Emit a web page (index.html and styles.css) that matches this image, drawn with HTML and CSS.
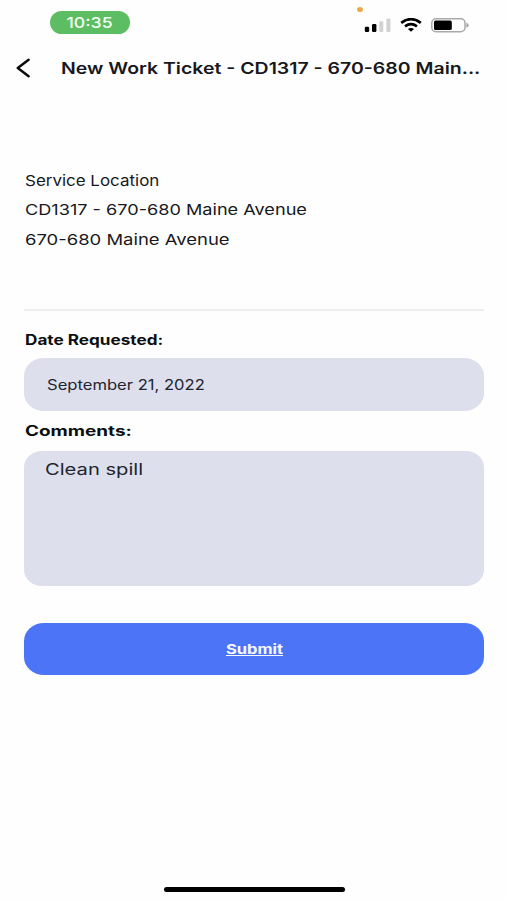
FILE: index.html
```html
<!DOCTYPE html>
<html lang="en">
  <head>
    <meta charset="UTF-8" />
    <meta name="viewport" content="width=device-width, initial-scale=1.0" />
    <title>New Work Ticket</title>
    <link rel="stylesheet" href="styles.css">
  </head>
  <body>
    <div class="status-bar">
      <div class="time"><span>10:35</span></div>
      <div class="status-icons">
        <span class="mic-dot"></span>
        <svg class="signal" width="27" height="14" viewBox="0 0 27 14">
          <rect x="0.8" y="8.7" width="4.4" height="5.3" rx="1.3" />
          <rect x="8" y="6" width="4.4" height="8" rx="1.3" />
          <rect class="off" x="15.3" y="3.2" width="4" height="10.8" rx="1.2" />
          <rect class="off" x="22.4" y="0.5" width="4" height="13.5" rx="1.2" />
        </svg>
        <svg class="wifi" width="22" height="14" viewBox="0 0 22 14">
          <path d="M1.2 4.9Q11 -2.6 20.8 4.9" />
          <path d="M5 8.3Q11 3.9 17 8.3" />
          <path class="wifi-base" d="M7.9 10.9Q11 8.9 14.1 10.9L11 13.7Z" />
        </svg>
        <svg class="battery" width="38" height="15" viewBox="0 0 38 15">
          <rect class="shell" x="0.8" y="0.8" width="33.2" height="13" rx="4.2" />
          <rect x="3" y="2.6" width="17.8" height="9.4" rx="1.6" />
          <path class="nub" d="M35.4 4.8Q37.6 5.6 37.6 7.3T35.4 9.8Z" />
        </svg>
      </div>
    </div>

    <header class="header">
      <svg class="back" width="15" height="20" viewBox="0 0 15 20">
        <path d="M12.6 1.7L1.8 10L12.6 18.2" />
      </svg>
      <h1>New Work Ticket - CD1317 - 670-680 Main...</h1>
    </header>

    <main>
      <div class="location">
        <p><span class="location-title">Service Location</span></p>
        <p><span class="location-name">CD1317 - 670-680 Maine Avenue</span></p>
        <p><span class="location-street">670-680 Maine Avenue</span></p>
      </div>

      <div class="label"><span class="label-date">Date Requested:</span></div>
      <div class="field"><span>September 21, 2022</span></div>
      <div class="label"><span class="label-comments">Comments:</span></div>
      <div class="comments"><span>Clean spill</span></div>
      <button class="submit"><span>Submit</span></button>
    </main>

    <div class="home-bar"></div>
  </body>
</html>
```
FILE: styles.css
```css
* {
  box-sizing: border-box;
}
body {
  margin: 0;
  height: 900px;
  display: flex;
  flex-direction: column;
  background: #fefefe;
  color: #17181c;
  font-family: Inter, "Liberation Sans", sans-serif;
}
p,
h1 {
  margin: 0;
}
/* wide lettering */
span,
h1 {
  display: inline-block;
  white-space: nowrap;
  transform-origin: left center;
}
.status-bar {
  height: 46px;
  padding: 11px 38px 0 50px;
  display: flex;
  justify-content: space-between;
  align-items: flex-start;
}
.time {
  width: 80px;
  height: 23px;
  line-height: 23px;
  border-radius: 12px;
  background: #5dbd63;
  color: #f4fff2;
  font-size: 15px;
  font-weight: 500;
  text-align: center;
}
.time span {
  transform: scaleX(1.18);
  transform-origin: center;
}
.status-icons {
  position: relative;
  display: flex;
  padding-top: 7px;
}
.mic-dot {
  position: absolute;
  left: -7px;
  top: -4px;
  width: 6px;
  height: 5px;
  border-radius: 50%;
  background: #eba94a;
}
.signal {
  margin-right: 9px;
}
.signal .off {
  fill: #d2d2d2;
}
.wifi {
  margin-right: 9px;
}
.wifi path {
  fill: none;
  stroke: #000;
  stroke-width: 2.7;
}
.wifi .wifi-base {
  fill: #000;
  stroke: none;
}
.battery .shell {
  fill: none;
  stroke: #a9a9a9;
  stroke-width: 1.5;
}
.battery .nub {
  fill: #a0a0a0;
}
.header {
  height: 44px;
  padding-left: 16px;
  display: flex;
  align-items: center;
}
.back {
  margin-right: 29.5px;
  fill: none;
  stroke: #0c0c0c;
  stroke-width: 2.5;
  stroke-linecap: round;
  stroke-linejoin: round;
}
h1 {
  font-size: 16px;
  font-weight: 600;
  transform: scaleX(1.217);
}
main {
  margin: 75px 23px 0 24px;
}
.location {
  height: 146px;
  border-bottom: 2px solid #eceef0;
  font-size: 15px;
}
.location p {
  height: 30px;
  line-height: 30px;
  padding-left: 0.5px;
}
.location p:first-child {
  line-height: 31px;
}
.location-title {
  transform: scaleX(1.13);
}
.location-name {
  transform: scaleX(1.208);
}
.location-street {
  transform: scaleX(1.23);
}
.label {
  height: 40px;
  padding: 10px 0 0 0.5px;
  line-height: 20px;
  font-size: 14px;
  font-weight: 700;
  color: #0d0e11;
}
.location + .label {
  height: 47px;
  padding-top: 19px;
}
.label-date {
  transform: scaleX(1.225);
}
.label-comments {
  transform: scaleX(1.35);
}
.field {
  height: 53px;
  line-height: 53px;
  padding-left: 23px;
  border-radius: 20px / 18px;
  background: #dde0ec;
  font-size: 14px;
  color: #22242f;
}
.field span {
  transform: scaleX(1.185);
}
.comments {
  height: 135px;
  padding: 7px 20.5px;
  line-height: 22px;
  border-radius: 18px / 16px;
  background: #dde0ec;
  font-size: 16px;
  color: #22242f;
}
.comments span {
  transform: scaleX(1.26);
}
.submit {
  display: block;
  width: 100%;
  height: 52px;
  margin-top: 37px;
  padding: 0;
  border: 0;
  border-radius: 20px / 18px;
  background: #4c74f6;
  color: #f5f8ff;
  font-family: inherit;
  font-size: 13px;
  font-weight: 700;
}
.submit span {
  text-decoration: underline;
  transform: scaleX(1.27);
  transform-origin: center;
}
.home-bar {
  width: 181px;
  height: 5px;
  margin: auto 0 8px 163.5px;
  border-radius: 3px;
  background: #000;
}
```
